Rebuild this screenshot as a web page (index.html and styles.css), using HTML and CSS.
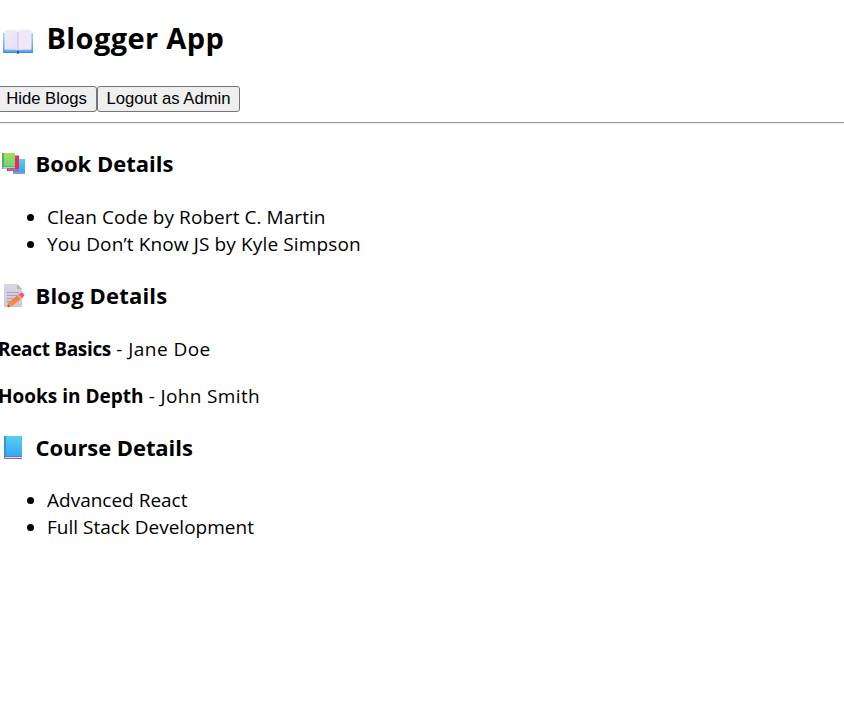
FILE: index.html
```html
<!DOCTYPE html>
<html lang="en">
<head>
<meta charset="utf-8">
<title>Blogger App</title>
<link rel="stylesheet" href="styles.css">
</head>
<body>
<main class="app">
  <h1 class="title">
    <svg class="icon-open" viewBox="0 0 32 25" aria-hidden="true">
      <defs><linearGradient id="cover" x2="0" y2="1"><stop stop-color="#8fdcf5"/><stop offset="1" stop-color="#489bee"/></linearGradient><linearGradient id="page" x2="1" y2="1"><stop stop-color="#f1edf8"/><stop offset="1" stop-color="#e7dcf5"/></linearGradient></defs>
      <path d="M1 3H31V23H1Z" fill="url(#cover)"/>
      <path d="M1 22H31V23H18Q16 24 14 23H1Z" fill="#438bdd"/>
      <path d="M3 19.500H29V20.500H3Z" fill="#c9bce6"/>
      <path d="M2.500 1Q2.500 0 4 0H13Q15.500 0 16 2V21Q15 19.500 12 19.500H2.500Z" fill="url(#page)"/>
      <path d="M16 2Q16.500 0 19 0H28Q29.500 0 29.500 1V19.500H20Q17 19.500 16 21Z" fill="#eee8f8"/>
      <path d="M16 2V21" stroke="#d0c4e2" stroke-width="1"/>
      <path d="M16 20.500V23.500" stroke="#1c62b8" stroke-width="2"/>
    </svg><span>Blogger App</span>
  </h1>
  <div class="actions"><button>Hide Blogs</button><button>Logout as Admin</button></div>
  <hr>
  <section>
    <h2>
      <svg class="icon" viewBox="0 0 26 26" aria-hidden="true">
        <defs><linearGradient id="green" x2="0" y2="1"><stop stop-color="#a5df55"/><stop offset="1" stop-color="#70ce80"/></linearGradient><linearGradient id="blue" x2="0" y2="1"><stop stop-color="#59cdf5"/><stop offset="1" stop-color="#35a4f2"/></linearGradient></defs>
        <g transform="translate(0 1)">
        <path d="M14 6H26V20H14Z" fill="url(#blue)"/><path d="M14 19.500H26V21H14Z" fill="#8b9fdd"/>
        <path d="M8 2.500H20V17H8Z" fill="#e62b61"/><path d="M8 16H20V18H8Z" fill="#b83068"/><path d="M9 16.600H20V17.200H9Z" fill="#f2c6df"/>
        <path d="M3 0H16V15H3Z" fill="url(#green)"/><path d="M3 0H5V15.500H3Z" fill="#5aae62"/><path d="M3 13.500H16V15.500H3Z" fill="#58a578"/><path d="M4 14H16V14.800H4Z" fill="#d4d5e8"/>
        </g>
      </svg><span class="book-title">Book Details</span>
    </h2>
    <ul><li><span class="clean">Clean Code by Robert C. Martin</span></li><li><span class="know">You Don’t Know JS by Kyle Simpson</span></li></ul>
  </section>
  <section>
    <h2>
      <svg class="icon" viewBox="0 0 26 26" aria-hidden="true">
        <defs><linearGradient id="paper" x2="0" y2="1"><stop stop-color="#dad4e2"/><stop offset="1" stop-color="#d3c4df"/></linearGradient><linearGradient id="pencil" x2="0" y2="1"><stop stop-color="#f17445"/><stop offset="1" stop-color="#ff963e"/></linearGradient></defs>
        <path d="M5 0H18L23 5V23H5Z" fill="url(#paper)"/><path d="M18 0V5H23Z" fill="#b9b1c6"/>
        <path d="M8 8.500H20M8 11.500H19M8 14.500H16M8 17.500H12" stroke="#aaa3b4"/>
        <path d="M9 19L20 10L23.500 14L13 22L8.500 23Z" fill="url(#pencil)"/><path d="M20 10L22.500 8.500Q24 8.500 25.500 11L23.500 14Z" fill="#f45261"/><path d="M19 11L22.500 15" stroke="#c7c1cf" stroke-width="1.200"/><path d="M9 21L8.500 23L11 22.500Z" fill="#553a3e"/>
      </svg><span class="blog-title">Blog Details</span>
    </h2>
    <p><strong class="react">React Basics</strong><span class="jane"> - Jane Doe</span></p>
    <p><strong class="hooks">Hooks in Depth</strong><span class="john"> - John Smith</span></p>
  </section>
  <section class="courses">
    <h2>
      <svg class="icon" viewBox="0 0 26 26" aria-hidden="true">
        <path d="M5 0H23V22H5Z" fill="url(#blue)"/><path d="M5 0H7V22H5Z" fill="#3298d5"/><path d="M5 20H23V23H5Z" fill="#7771c4"/><path d="M6 21H23V22H6Z" fill="#e1d6f4"/>
      </svg><span class="course-title">Course Details</span>
    </h2>
    <ul><li><span class="advanced">Advanced React</span></li><li><span class="full">Full Stack Development</span></li></ul>
  </section>
</main>
</body>
</html>
```
FILE: styles.css
```css
body { margin: 0; overflow: hidden; background: #fff; color: #000; font: 19px/27px "Open Sans", "Noto Sans", sans-serif; }
.app { display: flow-root; margin-left: -2px; }
h1, h2 { display: flex; align-items: center; font-weight: 700; white-space: nowrap; }
.title { height: 40px; margin: 18px 0 28px; font-size: 29px; line-height: 40px; letter-spacing: .37px; }
.icon-open { width: 32px; height: 25px; margin: 9px 12.5px 0 4px; }
.actions { display: flex; height: 26px; }
button { height: 26px; margin: 0; padding: 0 8px; border: 1px solid #767676; border-radius: 3px; background: #efefef; color: #000; font: 16.67px/22px "Liberation Sans", sans-serif; white-space: nowrap; }
button:first-child { width: 99px; padding: 0 9px 0 7px; }
button:last-child { width: 143px; }
hr { height: 1px; margin: 10px 0 24px; border: solid; border-width: 1px 0 0; border-color: #9a9a9a; background: #eee; }
h2 { height: 32px; margin: 0 0 24px; font-size: 22px; line-height: 32px; }
h2 span { margin-top: -2px; }
.icon { width: 26px; height: 26px; margin: 2px 10.5px 0 1px; }
ul { margin: 0 0 22px; padding-left: 49px; }
p { margin: 0 0 20px; white-space: pre; }
.courses { padding-top: 2px; }
.courses h2 { margin-bottom: 23px; }
.blog-title { letter-spacing: .17px; }
.course-title { letter-spacing: -.07px; }
.clean { letter-spacing: .06px; }
.know { letter-spacing: .13px; }
.react { letter-spacing: -.33px; }
.jane { letter-spacing: .45px; }
.john { letter-spacing: .35px; }
```
